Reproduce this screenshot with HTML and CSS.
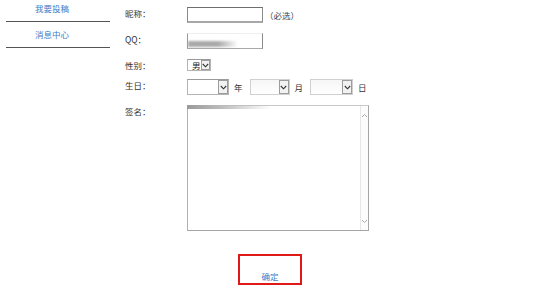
FILE: index.html
```html
<!DOCTYPE html>
<html lang="zh-CN">
<head>
<meta charset="utf-8">
<title>个人资料</title>
<link rel="stylesheet" href="styles.css">
</head>
<body>
<div class="page">
  <nav class="side">
    <a class="nav-item">我要投稿</a>
    <a class="nav-item">消息中心</a>
  </nav>
  <form class="form">
    <div class="row row-nick">
      <span class="label">昵称：</span>
      <span class="input"></span>
      <span class="hint">（必选）</span>
    </div>
    <div class="row row-qq">
      <span class="label">QQ：</span>
      <span class="input input-qq"><span class="smudge"></span></span>
    </div>
    <div class="row row-sex">
      <span class="label">性别：</span>
      <span class="select select-sex"><span class="val">男</span><span class="arrow"><svg width="7" height="5" viewBox="0 0 7 5"><path d="M0.8 1 L3.5 3.8 L6.2 1" fill="none" stroke="#333" stroke-width="1.1"/></svg></span></span>
    </div>
    <div class="row row-birth">
      <span class="label">生日：</span>
      <span class="select sel-year"><span class="val"></span><span class="arrow"><svg width="7" height="5" viewBox="0 0 7 5"><path d="M0.8 1 L3.5 3.8 L6.2 1" fill="none" stroke="#333" stroke-width="1.1"/></svg></span></span>
      <span class="unit">年</span>
      <span class="select sel-month"><span class="val faint"></span><span class="arrow"><svg width="7" height="5" viewBox="0 0 7 5"><path d="M0.8 1 L3.5 3.8 L6.2 1" fill="none" stroke="#333" stroke-width="1.1"/></svg></span></span>
      <span class="unit">月</span>
      <span class="select sel-day"><span class="val faint"></span><span class="arrow"><svg width="7" height="5" viewBox="0 0 7 5"><path d="M0.8 1 L3.5 3.8 L6.2 1" fill="none" stroke="#333" stroke-width="1.1"/></svg></span></span>
      <span class="unit">日</span>
    </div>
    <div class="row row-sign">
      <span class="label">签名：</span>
      <div class="textarea">
        <div class="ta-body"><span class="ta-smudge"></span></div>
        <div class="ta-scroll">
          <svg width="7" height="5" viewBox="0 0 7 5"><path d="M1 4 L3.5 1.5 L6 4" fill="none" stroke="#aaa" stroke-width="1"/></svg>
          <svg width="7" height="5" viewBox="0 0 7 5"><path d="M1 1 L3.5 3.5 L6 1" fill="none" stroke="#aaa" stroke-width="1"/></svg>
        </div>
      </div>
    </div>
    <div class="row row-submit">
      <a class="submit">确定</a>
    </div>
  </form>
</div>
</body>
</html>
```
FILE: styles.css
```css
html, body {
  margin: 0;
  padding: 0;
  background: #fff;
}
body {
  font-family: "Noto Sans CJK SC", "Noto Sans", sans-serif;
  font-size: 8.5px;
  color: #333;
}
.page {
  display: flex;
  align-items: flex-start;
  width: 548px;
  height: 290px;
  overflow: hidden;
}
.side {
  display: flex;
  flex-direction: column;
  width: 104px;
  margin-left: 6px;
}
.nav-item {
  display: block;
  line-height: 12px;
  padding: 6px 0 7px 29px;
  border-bottom: 1px solid #555;
  color: #3d7cc9;
}
.nav-item:first-child {
  padding-top: 2px;
}
.form {
  display: flex;
  flex-direction: column;
  margin-left: 15px;
  padding-top: 7px;
}
.row {
  display: flex;
  align-items: flex-start;
}
.label {
  width: 62px;
  line-height: 12px;
  padding-top: 0;
  color: #333;
}
.row-qq { margin-top: 10px; }
.row-sex { margin-top: 10px; }
.row-birth { margin-top: 8px; }
.row-sign { margin-top: 10px; }
.row-submit { margin-top: 23px; }

.input {
  display: block;
  box-sizing: border-box;
  width: 76px;
  height: 16px;
  border: 1px solid #8a8a8a;
  border-top-color: #6e6e6e;
  border-bottom: 2px solid #a8a8a8;
  background: #fff;
}
.hint {
  margin-left: 2px;
  line-height: 12px;
  padding-top: 2px;
  color: #444;
}
.input-qq {
  border-left: 1px solid #999;
  border-bottom-width: 1px;
  border-top: 1px solid #eee;
  padding-top: 7px;
}
.smudge {
  display: block;
  width: 50px;
  height: 6px;
  background: linear-gradient(to right, #a9a9a9 0, #a9a9a9 60%, rgba(170,170,170,0) 100%);
  filter: blur(0.8px);
}
.select {
  display: flex;
  box-sizing: border-box;
  height: 16px;
  border: 1px solid #b4b4b4;
  border-top-color: #9a9a9a;
  background: #fff;
}
.select .val {
  flex: 1;
  line-height: 10px;
  padding-left: 4px;
  color: #222;
}
.select .val.faint {
  background: linear-gradient(to bottom, #f6f6f6, #fff);
}
.select .arrow {
  display: flex;
  align-items: center;
  justify-content: center;
  width: 8px;
  border: 1px solid #9c9c9c;
  background: #f2f2f2;
}
.select-sex {
  width: 24px;
  height: 12px;
}
.sel-year { width: 42px; }
.sel-month { width: 40px; border-color: #d0d0d0; }
.sel-day { width: 43px; border-color: #d0d0d0; }
.unit {
  margin: 0 7px 0 5px;
  line-height: 12px;
  padding-top: 2px;
  color: #333;
}
.textarea {
  display: flex;
  box-sizing: border-box;
  width: 182px;
  height: 126px;
  border: 1px solid #a5a5a5;
  border-top-color: #c8c8c8;
  border-left-color: #b0b0b0;
  background: #fff;
}
.ta-body {
  flex: 1;
}
.ta-smudge {
  display: block;
  width: 84px;
  height: 4px;
  margin-top: -1px;
  margin-left: -1px;
  background: linear-gradient(to right, #9a9a9a 0, #bcbcbc 40%, rgba(220,220,220,0) 100%);
  filter: blur(0.7px);
}
.ta-scroll {
  display: flex;
  flex-direction: column;
  justify-content: space-between;
  align-items: center;
  width: 7px;
  padding: 7px 0 6px;
  border-left: 1px solid #e6e6e6;
  background: #fcfcfc;
}
.submit {
  display: block;
  box-sizing: border-box;
  width: 64px;
  height: 31px;
  margin-left: 113px;
  padding-top: 14px;
  border: 2px solid #e01818;
  text-align: center;
  line-height: 12px;
  color: #3d7cc9;
}
```
